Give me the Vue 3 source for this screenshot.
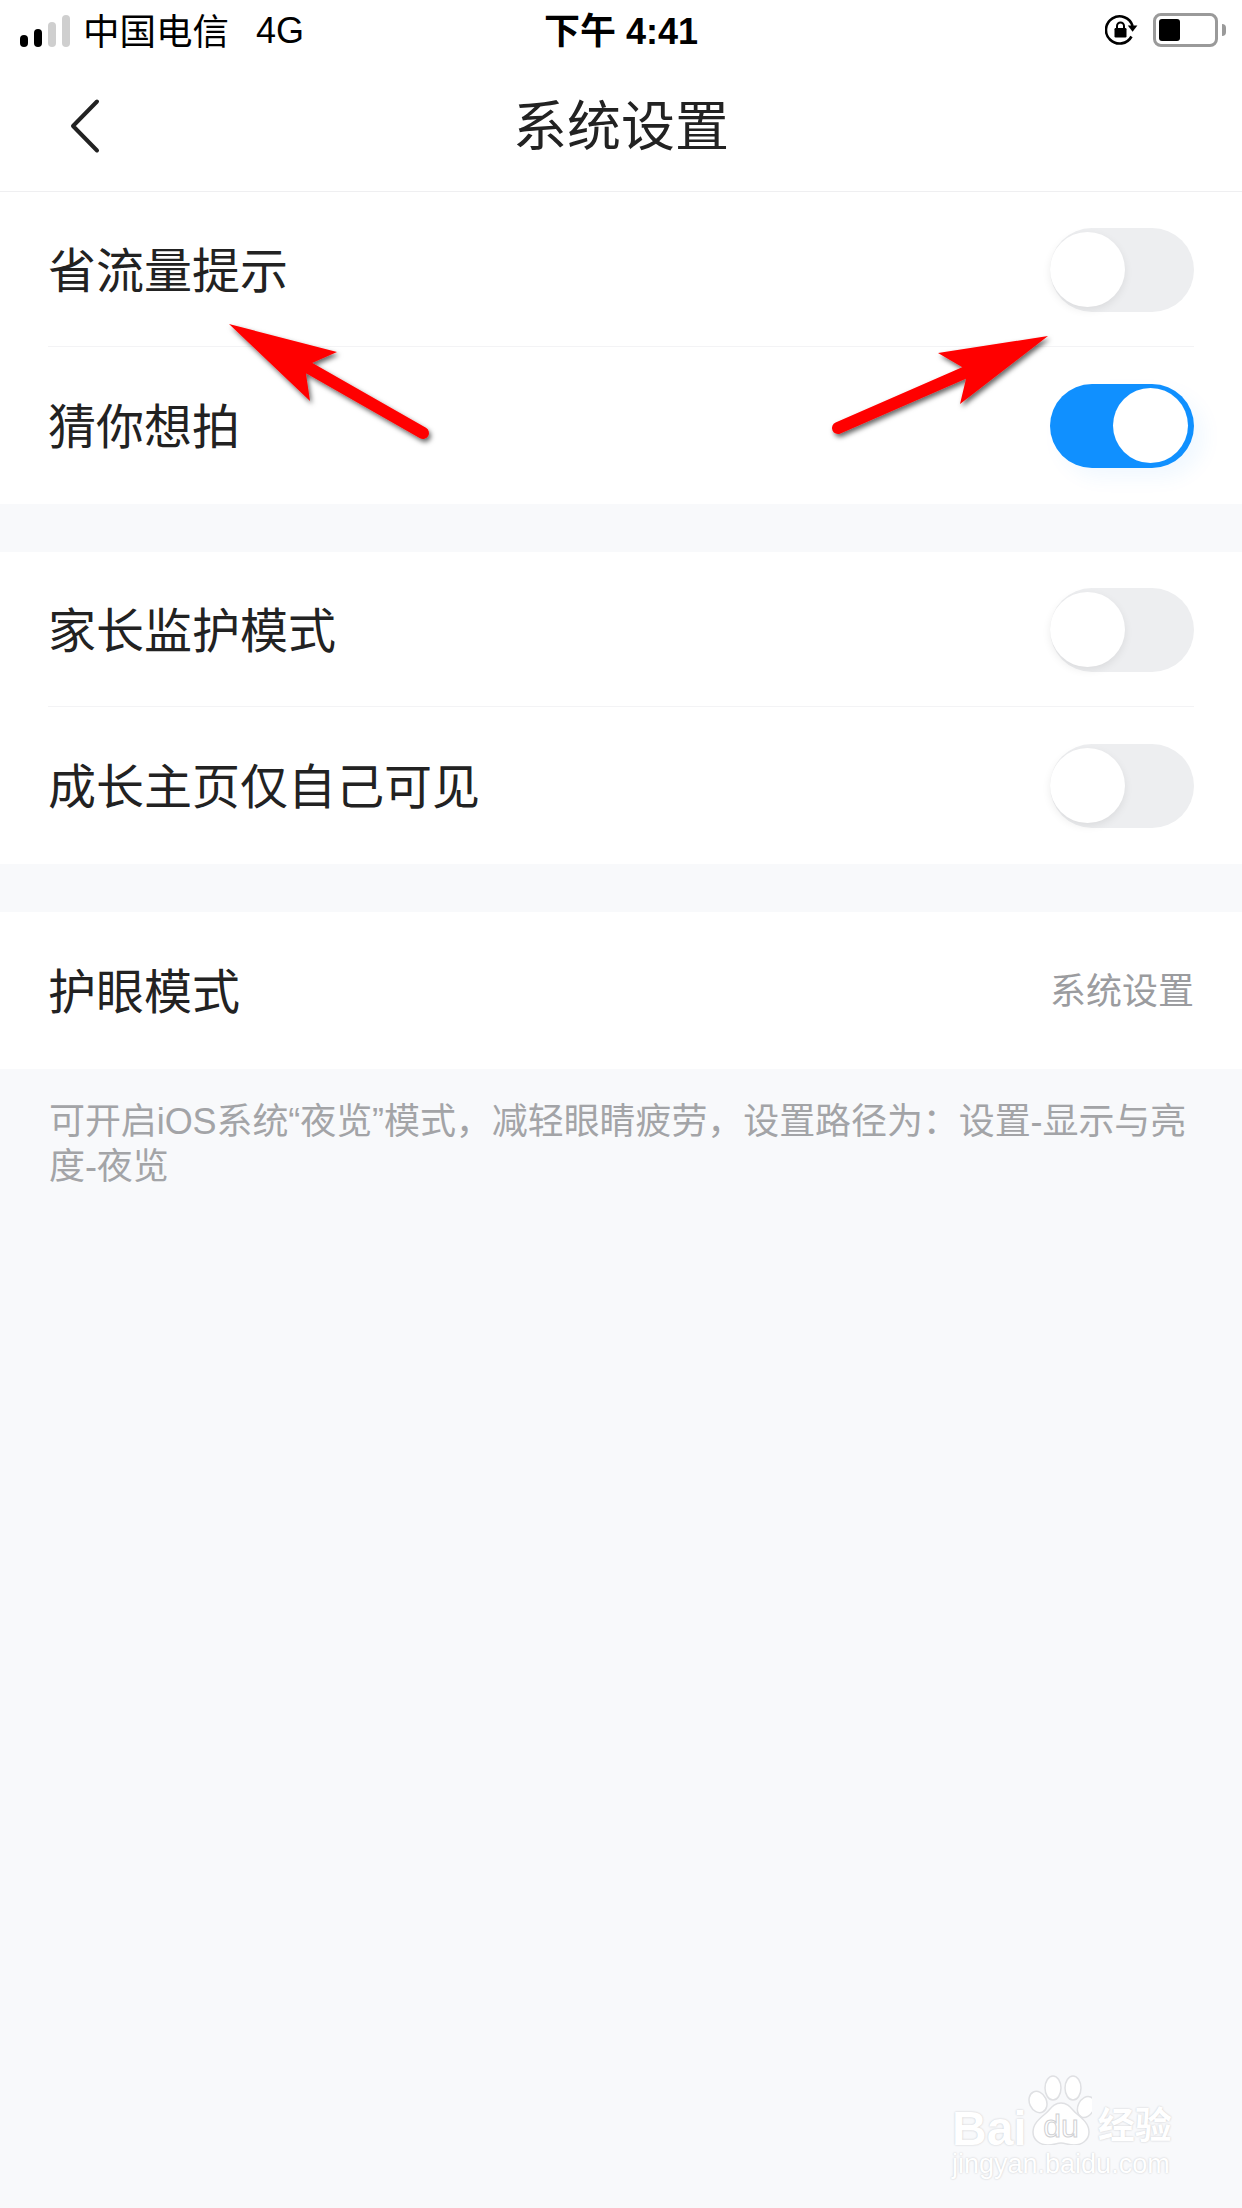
<template>
  <div class="page">
    <div class="status-bar">
      <div class="status-left">
        <div class="signal">
          <span v-for="bar in signalBars" :key="bar.height" class="signal-bar" :class="{ on: bar.on }" :style="{ height: bar.height + 'px' }"></span>
        </div>
        <span class="carrier">中国电信</span>
        <span class="network">4G</span>
      </div>
      <div class="clock">下午 4:41</div>
      <div class="status-right">
        <svg class="rotation-lock" width="34" height="32" viewBox="0 0 34 32">
          <path d="M26.500 22.500A13.600 13.600 0 1 1 27.600 12" fill="none" stroke="#000" stroke-width="2.600" />
          <path d="M22.800 11.500h9.600l-4.800 6.200z" fill="#000" />
          <rect x="9.500" y="14" width="12" height="9.500" rx="1.200" fill="#000" />
          <path d="M12 14.500v-2.600a3.500 3.500 0 0 1 7 0v2.600" fill="none" stroke="#000" stroke-width="2" />
        </svg>
        <div class="battery">
          <div class="battery-fill"></div>
        </div>
        <div class="battery-nub"></div>
      </div>
    </div>

    <header class="nav">
      <svg class="back" width="36" height="60" viewBox="0 0 36 60">
        <path d="M30 5.500L6 30l24 24.500" fill="none" stroke="#222" stroke-width="4" stroke-linecap="round" stroke-linejoin="round" />
      </svg>
      <h1 class="title">系统设置</h1>
    </header>

    <section v-for="(group, g) in groups" :key="g" class="group">
      <div v-for="row in group" :key="row.label" class="row">
        <span class="label">{{ row.label }}</span>
        <div class="switch" :class="{ on: row.on }">
          <div class="knob"></div>
        </div>
      </div>
    </section>

    <section class="group">
      <div class="row">
        <span class="label">护眼模式</span>
        <span class="value">系统设置</span>
      </div>
    </section>

    <p class="note">可开启iOS系统“夜览”模式，减轻眼睛疲劳，设置路径为：设置-显示与亮度-夜览</p>

    <svg class="arrows" width="1242" height="500" viewBox="0 0 1242 500">
      <defs>
        <filter id="arrowShadow" x="-10%" y="-10%" width="125%" height="130%">
          <feDropShadow dx="2" dy="3" stdDeviation="2.500" flood-color="#000" flood-opacity="0.6" />
        </filter>
      </defs>
      <g filter="url(#arrowShadow)" fill="#f00">
        <polygon points="229,324 337,352 312,363 306,374 310,401" />
        <path d="M309 368L423 433" stroke="#f00" stroke-width="12" stroke-linecap="round" />
        <polygon points="1048,336 938,353 962,367 966,379 960,404" />
        <path d="M964 373L838 428" stroke="#f00" stroke-width="12" stroke-linecap="round" />
      </g>
    </svg>

    <div class="watermark">
      <div class="mark-top">
        <span class="mark-bai">Bai</span>
        <svg class="paw" width="64" height="70" viewBox="0 0 64 70">
          <g fill="#fff" stroke="#dfe0e3" stroke-width="1.500">
            <ellipse cx="10" cy="27" rx="8.500" ry="11" transform="rotate(-25 10 27)" />
            <ellipse cx="25" cy="13" rx="8" ry="12" />
            <ellipse cx="45" cy="13" rx="8" ry="12" />
            <ellipse cx="58" cy="32" rx="8" ry="11" transform="rotate(25 58 32)" />
            <path d="M33 28c8 0 11 7 16 11 6 5 12 10 12 18 0 8-7 13-15 13-5 0-9-2-13-2s-8 2-13 2c-8 0-15-5-15-13 0-8 6-13 12-18 5-4 8-11 16-11z" />
          </g>
          <text x="33" y="62" text-anchor="middle" class="mark-du">du</text>
        </svg>
        <span class="mark-cn">经验</span>
      </div>
      <div class="mark-url">jingyan.baidu.com</div>
    </div>
  </div>
</template>

<script setup>
const signalBars = [
  { height: 12, on: true },
  { height: 18, on: true },
  { height: 25, on: false },
  { height: 32, on: false }
]

const groups = [
  [
    { label: '省流量提示', on: false },
    { label: '猜你想拍', on: true }
  ],
  [
    { label: '家长监护模式', on: false },
    { label: '成长主页仅自己可见', on: false }
  ]
]
</script>

<style scoped>
.page {
  position: relative;
  width: 1242px;
  height: 2208px;
  overflow: hidden;
  background: #f8f9fb;
  font-family: "Liberation Sans", "Noto Sans CJK SC", sans-serif;
  color: #222;
}

.status-bar {
  position: relative;
  display: flex;
  align-items: center;
  justify-content: space-between;
  height: 60px;
  padding: 0 16px 0 20px;
  background: #fff;
  color: #000;
  font-size: 36px;
}

.status-left {
  display: flex;
  align-items: center;
}

.signal {
  display: flex;
  align-items: flex-end;
  gap: 6px;
  height: 32px;
  margin-top: 2px;
}

.signal-bar {
  width: 8px;
  border-radius: 4px;
  background: #cfcfcf;
}

.signal-bar.on {
  background: #000;
}

.carrier {
  margin-left: 13px;
  padding-bottom: 2px;
  font-size: 36.500px;
}

.network {
  margin-left: 27px;
  padding-top: 2px;
}

.clock {
  position: absolute;
  left: 0;
  right: 0;
  padding-bottom: 4px;
  text-align: center;
  font-weight: 700;
}

.status-right {
  display: flex;
  align-items: center;
}

.rotation-lock {
  margin-right: 14px;
}

.battery {
  width: 65px;
  height: 34px;
  box-sizing: border-box;
  padding: 3px;
  border: 3px solid #9a9a9a;
  border-radius: 8px;
}

.battery-fill {
  width: 21px;
  height: 100%;
  border-radius: 3px;
  background: #000;
}

.battery-nub {
  width: 4px;
  height: 12px;
  margin-left: 4px;
  border-radius: 0 4px 4px 0;
  background: #9a9a9a;
}

.nav {
  position: relative;
  display: flex;
  align-items: center;
  justify-content: center;
  height: 131px;
  background: #fff;
  border-bottom: 1px solid #efeff1;
}

.back {
  position: absolute;
  left: 67px;
  top: 36px;
}

.title {
  margin: 0 0 6px;
  font-size: 54px;
  font-weight: 400;
  color: #222;
}

.group {
  margin-bottom: 48px;
  background: #fff;
}

.row {
  display: flex;
  align-items: center;
  justify-content: space-between;
  height: 155px;
  margin: 0 48px 0 48px;
  box-sizing: border-box;
  border-bottom: 1px solid #f3f3f5;
}

.row:last-child {
  height: 157px;
  border-bottom: 0;
}

.label {
  padding-bottom: 5px;
  font-size: 48px;
}

.value {
  padding-bottom: 6px;
  font-size: 36px;
  color: #9b9c9f;
}

.switch {
  position: relative;
  width: 144px;
  height: 84px;
  margin-top: 2px;
  border-radius: 42px;
  background: #edeef0;
}

.row:last-child .switch {
  margin-top: 0;
}

.switch.on {
  background: #1090ff;
  box-shadow: 10px 10px 20px rgba(16, 144, 255, 0.06);
}

.knob {
  position: absolute;
  left: 0;
  top: 4px;
  width: 75px;
  height: 75px;
  border-radius: 50%;
  background: #fff;
  box-shadow: 0 3px 8px rgba(0, 0, 0, 0.08);
}

.switch.on .knob {
  left: 63px;
  box-shadow: none;
}

.note {
  margin: -18px 50px 0 49px;
  font-size: 36px;
  line-height: 45px;
  letter-spacing: -0.08px;
  color: #a3a4a7;
}

.arrows {
  position: absolute;
  left: 0;
  top: 0;
  pointer-events: none;
}

.watermark {
  position: absolute;
  left: 952px;
  top: 2075px;
  color: #fff;
}

.mark-top {
  display: flex;
  align-items: flex-end;
  height: 70px;
}

.mark-bai {
  margin-bottom: -2px;
  font-size: 48px;
  line-height: 36px;
  font-weight: 700;
  text-shadow: 0 0 2px #c3c4c7;
}

.paw {
  margin: 0 6px 0 1px;
  flex: none;
}

.mark-du {
  font-size: 32px;
  fill: #fff;
  stroke: #cfd0d3;
  stroke-width: 1;
}

.mark-cn {
  font-size: 37px;
  line-height: 36px;
  font-weight: 700;
  text-shadow: 0 0 2px #c3c4c7;
}

.mark-url {
  margin-top: 3px;
  font-size: 27px;
  line-height: 32px;
  text-shadow: 0 0 2px #c3c4c7;
}
</style>
